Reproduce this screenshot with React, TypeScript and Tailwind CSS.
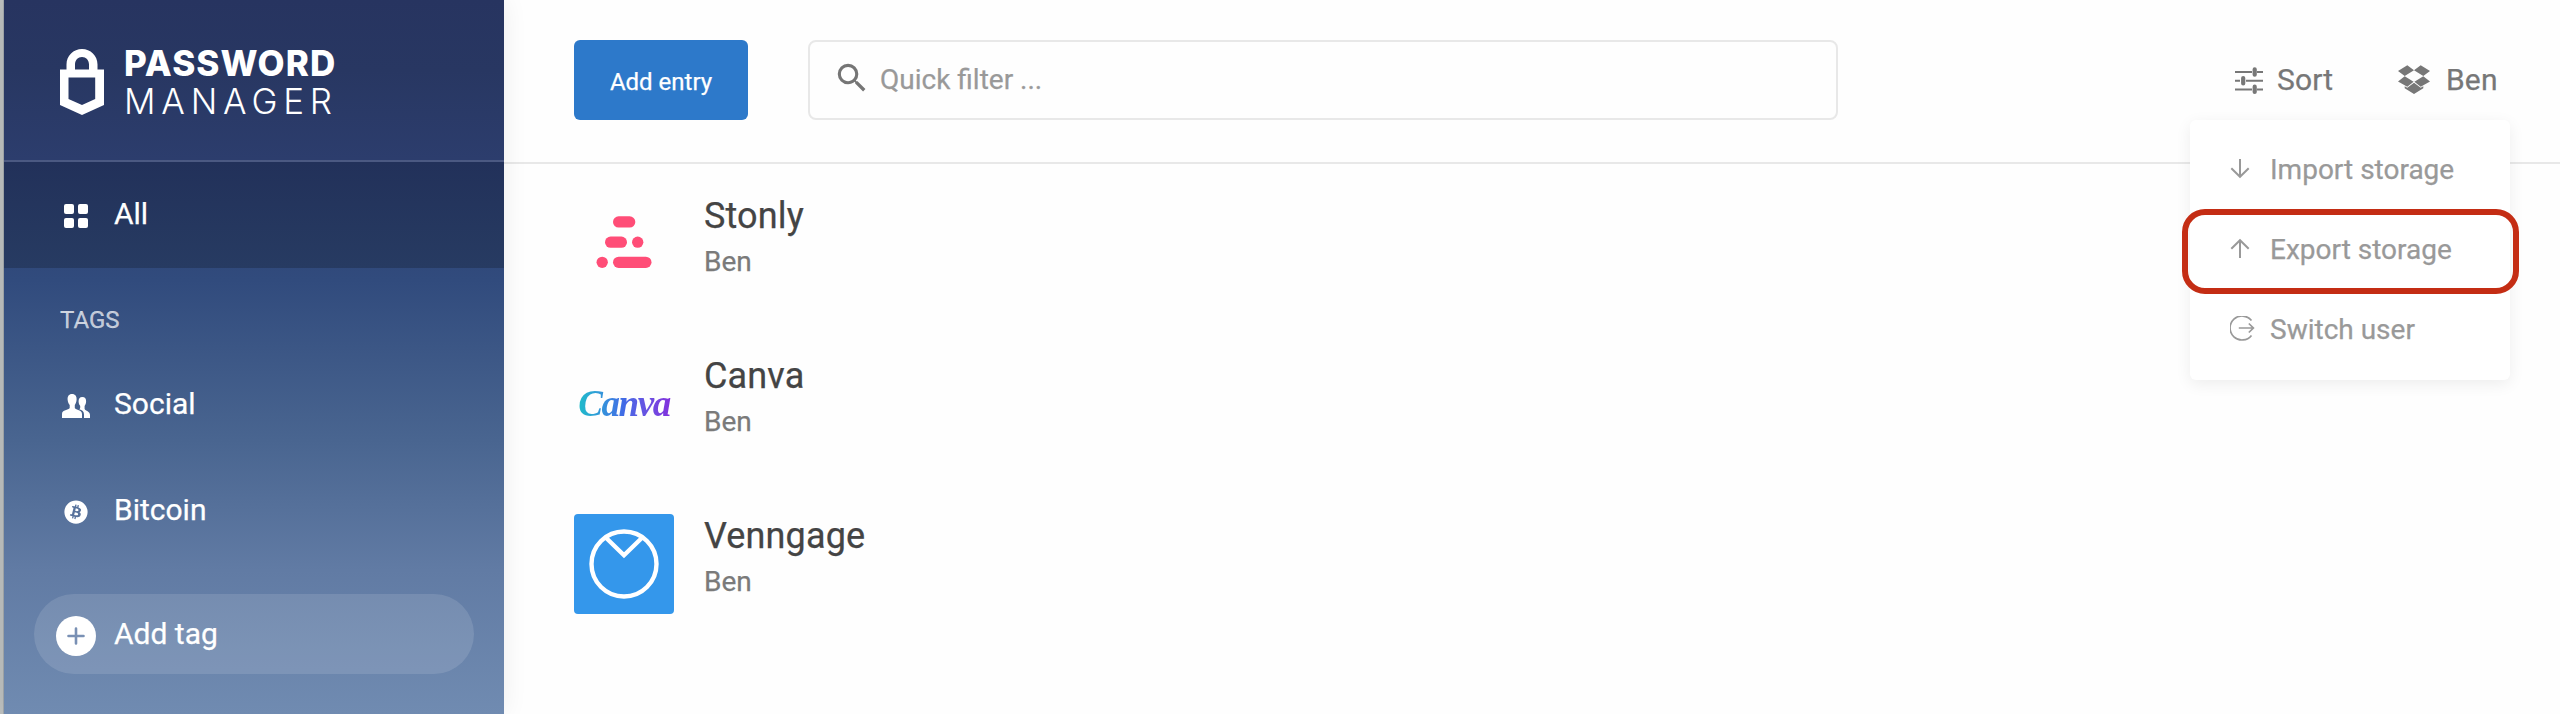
import React from "react";
import { FaBitcoin } from "react-icons/fa";
import { MdSearch } from "react-icons/md";

function LockLogo() {
  return (
    <svg width="44" height="66" viewBox="0 0 44 66" fill="#fff" className="block shrink-0">
      <path
        fillRule="evenodd"
        d="M0 20.5H6.5V15.5C6.5 6.5 13.5 0 22 0S37.5 6.5 37.5 15.5V20.5H44V56L22 66L0 56ZM15 20.5H29V15.5C29 11 26 8 22 8S15 11 15 15.5ZM8.500 28.500V50L22 56L35.200 50V28.500Z"
      />
    </svg>
  );
}

function GridIcon() {
  return (
    <svg width="24" height="24" viewBox="0 0 24 24" fill="#fff">
      <rect x="0" y="0" width="10" height="10" rx="2" />
      <rect x="14" y="0" width="10" height="10" rx="2" />
      <rect x="0" y="14" width="10" height="10" rx="2" />
      <rect x="14" y="14" width="10" height="10" rx="2" />
    </svg>
  );
}

function PeopleIcon() {
  return (
    <svg width="28" height="24" viewBox="0 0 28 24" fill="#fff">
      <path d="M10 0C13.400 0 14.800 2.400 14.600 5.600C14.500 8.300 13.600 9.800 12.800 11V14C14 16 20 15.800 20 20V24H0V20C0 15.800 6.500 16 7.700 14V11C6.600 9.800 5.800 8.300 5.600 5.600C5.400 2.400 6.800 0 10 0Z" />
      <path d="M20.300 3C23.100 3 24.300 5 24.100 7.600C24 9.800 23.300 11 22.600 12V15C23.500 17.300 28 17 28 21V24H22V20.500C22 17.500 20.300 16.300 17.200 15.300C18 14.900 18.200 14.300 18.200 13.500V12C17.300 11 16.700 9.800 16.600 7.600C16.500 5 17.700 3 20.300 3Z" />
    </svg>
  );
}

function PlusCircle() {
  return (
    <svg width="40" height="40" viewBox="0 0 40 40">
      <circle cx="20" cy="20" r="20" fill="#fff" />
      <path d="M20 12.500V27.500M12.500 20H27.500" stroke="#7990b4" strokeWidth="2.600" strokeLinecap="round" />
    </svg>
  );
}

function SlidersIcon() {
  return (
    <svg width="28" height="28" viewBox="0 0 28 28" fill="none" stroke="#777" className="block">
      <path d="M0 5H17M22 5H28M0 13.700H5M11 13.700H28M0 22.400H17M22 22.400H28" strokeWidth="2" />
      <path d="M19.700 2.300V7.700M8.200 11V16.400M19.700 19.700V25" strokeWidth="4.200" strokeLinecap="round" />
    </svg>
  );
}

function DropboxIcon() {
  return (
    <svg width="32" height="30" viewBox="0 0 32 30" fill="#777" className="block">
      <path d="M9.300 0.200L16 5.300L6.700 11L0 6ZM22.700 0.200L32 6L25.300 11L16 5.300ZM6.700 11.300L15.600 16.700L9.300 21.800L0 16.400ZM25.300 11.300L32 16.400L22.700 21.800L16.400 16.700Z" />
      <path d="M16 17.800L22.700 22.800L25.300 21.200V23.200L16 29L6.700 23.200V21.200L9.300 22.800Z" />
    </svg>
  );
}

function ArrowDown() {
  return (
    <svg width="26" height="26" viewBox="0 0 26 26" fill="none" stroke="#999" strokeWidth="2" className="block">
      <path d="M10 3V21M1.300 12.200L10 20.800L18.700 12.200" />
    </svg>
  );
}

function ArrowUp() {
  return (
    <svg width="26" height="26" viewBox="0 0 26 26" fill="none" stroke="#999" strokeWidth="2" className="block">
      <path d="M10 22V4M1.300 12.800L10 4.200L18.700 12.800" />
    </svg>
  );
}

function ExitIcon() {
  return (
    <svg width="26" height="26" viewBox="0 0 26 26" fill="none" stroke="#999" strokeWidth="1.700" className="block">
      <path d="M21.500 4.600A12 12 0 1 0 21.500 19.400" />
      <path d="M8.800 12H23.500M18.800 7.500L23.400 12L18.800 16.500" />
    </svg>
  );
}

function StonlyLogo() {
  return (
    <svg width="100" height="100" viewBox="0 0 100 100" fill="#ff4d77">
      <rect x="39" y="22.300" width="22.300" height="11.300" rx="5.650" />
      <rect x="31" y="42.500" width="22" height="11.300" rx="5.650" />
      <circle cx="63.700" cy="48.200" r="5.650" />
      <circle cx="28.200" cy="68.300" r="5.650" />
      <rect x="39" y="62.700" width="38.500" height="11.300" rx="5.650" />
    </svg>
  );
}

function CanvaLogo() {
  return (
    <div className="flex size-[100px] items-center justify-center">
      <span className="bg-linear-to-r from-[#18c3c6] via-[#4169e6] to-[#8428dc] bg-clip-text px-1 font-['Liberation_Serif',serif] text-[37px] leading-[50px] font-bold tracking-[-1.4px] italic text-transparent [-webkit-text-stroke:0px]">
        Canva
      </span>
    </div>
  );
}

function VenngageLogo() {
  return (
    <svg width="100" height="100" viewBox="0 0 100 100" fill="none" stroke="#fff">
      <rect width="100" height="100" rx="4" fill="#3497eb" stroke="none" />
      <circle cx="50" cy="50" r="32.500" strokeWidth="4.400" />
      <path d="M31.700 23.500L50 41.300L68.300 23.500" strokeWidth="4.400" />
    </svg>
  );
}

function NavRow({ icon, label }: { icon: React.ReactNode; label: string }) {
  return (
    <div className="flex h-[106px] items-center pl-[52px]">
      <span className="flex w-10 justify-center pt-0.5">{icon}</span>
      <span className="pb-[3px] pl-[18px]">{label}</span>
    </div>
  );
}

const entries = [
  { title: "Stonly", user: "Ben", logo: <StonlyLogo /> },
  { title: "Canva", user: "Ben", logo: <CanvaLogo /> },
  { title: "Venngage", user: "Ben", logo: <VenngageLogo /> },
];

const menu = [
  { label: "Import storage", icon: <ArrowDown /> },
  { label: "Export storage", icon: <ArrowUp />, marked: true },
  { label: "Switch user", icon: <ExitIcon /> },
];

export default function App() {
  return (
    <div className="flex h-[714px] w-[2560px] overflow-hidden bg-[#fefefe] font-['Roboto',sans-serif] [-webkit-text-stroke:0.25px]">
      <div className="w-1 shrink-0 bg-linear-to-r from-[#bcbfbe] from-70% to-[#8f969c]" />
      <aside className="z-10 w-[500px] shrink-0 bg-[linear-gradient(180deg,#273460_0px,#283762_70px,#2c3d6d_160px,#314b7d_280px,#496590_440px,#617ba4_570px,#708bb1_714px)] text-[30px] leading-[36px] text-white shadow-[0_0_24px_rgba(0,0,0,0.07)]">
        <div className="flex h-[162px] border-b-2 border-white/15 pt-[49px] pl-14">
          <LockLogo />
          <div className="flex flex-col pl-[20px] font-['Inter',sans-serif] text-[35px] [-webkit-text-stroke:0px]">
            <span className="-mt-[5px] h-[38px] leading-[38px] font-extrabold tracking-[1.1px]">PASSWORD</span>
            <span className="h-[38px] leading-[38px] font-light tracking-[5.800px]">MANAGER</span>
          </div>
        </div>
        <div className="bg-[linear-gradient(180deg,#22315a,#273b62)]">
          <NavRow icon={<GridIcon />} label="All" />
        </div>
        <div className="h-[84px] pt-[34px] pl-14 text-[24px] text-white/70">TAGS</div>
        <NavRow icon={<PeopleIcon />} label="Social" />
        <NavRow icon={<FaBitcoin size={24} />} label="Bitcoin" />
        <div className="mt-[30px] ml-[30px] flex h-20 w-[440px] items-center rounded-full bg-white/12 pl-[22px]">
          <span className="pt-1">
            <PlusCircle />
          </span>
          <span className="pl-[18px]">Add tag</span>
        </div>
      </aside>
      <main className="flex-1">
        <header className="flex h-[164px] items-start border-b-2 border-[#e8e8e8] pt-10 pl-[70px] text-[#777]">
          <button className="h-20 w-[174px] rounded-md bg-[#2d79ca] pt-[3px] text-[24px] text-white">Add entry</button>
          <div className="ml-[60px] flex h-20 w-[1030px] items-center rounded-lg border-2 border-[#e8e8e8] pl-[23px] text-[28px] text-[#999]">
            <MdSearch size={38} color="#757575" className="mb-1" />
            <span className="pl-[9px]">Quick filter ...</span>
          </div>
          <div className="ml-[397px] flex h-20 items-center text-[30px]">
            <span className="pt-0.5">
              <SlidersIcon />
            </span>
            <span className="w-[135px] pb-[2px] pl-[14px] tracking-[0.15px]">Sort</span>
            <DropboxIcon />
            <span className="pb-[2px] pl-[16px] tracking-[0.15px]">Ben</span>
          </div>
          <div className="absolute top-[120px] left-[2190px] w-80 rounded-md bg-white py-[10px] text-[28px] text-[#999] shadow-[0_4px_16px_rgba(0,0,0,0.07)]">
            {menu.map((item) => (
              <div key={item.label} className="relative flex h-20 items-center pl-10">
                <span className="pb-[2px]">{item.icon}</span>
                <span className="pl-[14px]">{item.label}</span>
                {item.marked && (
                  <div className="absolute -top-[1px] -left-2 h-[85px] w-[337px] rounded-[23px] border-6 border-[#c42d14]" />
                )}
              </div>
            ))}
          </div>
        </header>
        <div className="flex flex-col gap-[60px] pt-[30px] pl-[70px]">
          {entries.map((e) => (
            <div key={e.title} className="flex h-[100px]">
              {e.logo}
              <div className="pl-[30px]">
                <div className="h-[44px] text-[36px] leading-[44px] tracking-[0.15px] text-[#444]">{e.title}</div>
                <div className="mt-[6px] text-[28px] leading-[36px] text-[#7a7a7a]">{e.user}</div>
              </div>
            </div>
          ))}
        </div>
      </main>
    </div>
  );
}
